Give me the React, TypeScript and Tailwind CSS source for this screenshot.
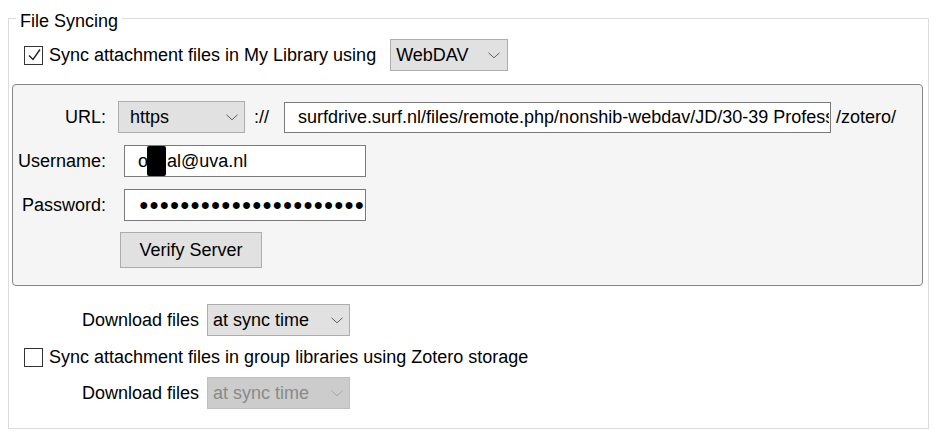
import React from 'react';

const font = { fontFamily: '"Liberation Sans", Arial, sans-serif' };

const Chevron: React.FC<{ color?: string }> = ({ color = '#606060' }) => (
  <svg width="12" height="7" viewBox="0 0 12 7" fill="none">
    <path d="M0.5 0.8 L6 5.8 L11.5 0.8" stroke={color} strokeWidth="1" />
  </svg>
);

const Checkbox: React.FC<{ checked?: boolean }> = ({ checked }) => (
  <div className="w-[19px] h-[19px] border border-[#333333] bg-white flex-none">
    {checked && (
      <svg width="17" height="17" viewBox="0 0 17 17" fill="none">
        <path d="M4 8.5 L8 12.5 L15 2.5" stroke="#222222" strokeWidth="1.4" />
      </svg>
    )}
  </div>
);

const Select: React.FC<{ value: string; className: string; disabled?: boolean }> = ({ value, className, disabled }) => (
  <div
    className={
      'flex items-center justify-between h-[32px] border ' +
      (disabled ? 'bg-[#cccccc] border-[#bfbfbf] text-[#8a8a8a] ' : 'bg-[#e1e1e1] border-[#adadad] text-black ') +
      className
    }
  >
    <span>{value}</span>
    <Chevron color={disabled ? '#a6a6a6' : '#606060'} />
  </div>
);

export default function App() {
  return (
    <div className="w-[935px] h-[436px] bg-white text-black text-[18px] leading-[24px] overflow-hidden" style={font}>
      <fieldset className="ml-[8px] mt-[6px] w-[921px] h-[423px] border border-[#dcdcdc] pl-[3px] pr-[5px]">
        <legend className="ml-[4px] px-[4px] pt-[6px] leading-[18px]">File Syncing</legend>

        <div className="mt-[9px] flex items-center h-[32px] pl-[12px]">
          <Checkbox checked />
          <span className="ml-[6px]">Sync attachment files in My Library using</span>
          <Select value="WebDAV" className="ml-[14px] w-[118px] pl-[5px] pr-[7px]" />
        </div>

        <div className="mt-[13px] border border-[#858585] rounded-[4px] bg-[#f5f5f5] pt-[16px] pb-[17px]">
          <div className="flex items-center h-[32px]">
            <span className="w-[93px] text-right">URL:</span>
            <Select value="https" className="ml-[12px] w-[127px] pl-[11px] pr-[6px]" />
            <span className="ml-[9px]">://</span>
            <input
              readOnly
              value="surfdrive.surf.nl/files/remote.php/nonshib-webdav/JD/30-39 Professional"
              className="ml-[15px] w-[547px] h-[31px] border border-[#7a7a7a] bg-white pl-[13px] pr-[1px] outline-none text-[18px]"
              style={font}
            />
            <span className="ml-[5px]">/zotero/</span>
          </div>

          <div className="mt-[12px] flex items-center h-[32px]">
            <span className="w-[93px] text-right">Username:</span>
            <div className="ml-[18px] w-[242px] h-[32px] border border-[#7a7a7a] bg-white pl-[13px] flex items-center overflow-hidden whitespace-nowrap">
              <span>o</span>
              <span className="w-[19px] h-[30px] bg-black -ml-[1px] mr-[1px] rounded-[2px]" />
              <span>al@uva.nl</span>
            </div>
          </div>

          <div className="mt-[12px] flex items-center h-[32px]">
            <span className="w-[93px] text-right">Password:</span>
            <div className="ml-[18px] w-[242px] h-[32px] border border-[#7a7a7a] bg-white pl-[14px] flex items-center overflow-hidden whitespace-nowrap text-[16px] tracking-[0.6px]">
              {'●'.repeat(30)}
            </div>
          </div>

          <div className="mt-[11px] pl-[107px]">
            <div className="w-[142px] h-[36px] border border-[#adadad] bg-[#e1e1e1] flex items-center justify-center">
              Verify Server
            </div>
          </div>
        </div>

        <div className="mt-[18px] flex items-center h-[32px] pl-[70px]">
          <span>Download files</span>
          <Select value="at sync time" className="ml-[8px] w-[143px] pl-[5px] pr-[6px]" />
        </div>

        <div className="mt-[9px] flex items-center h-[24px] pl-[12px]">
          <Checkbox />
          <span className="ml-[6px]">Sync attachment files in group libraries using Zotero storage</span>
        </div>

        <div className="mt-[8px] flex items-center h-[32px] pl-[70px]">
          <span>Download files</span>
          <Select value="at sync time" disabled className="ml-[8px] w-[143px] pl-[5px] pr-[6px]" />
        </div>
      </fieldset>
    </div>
  );
}
